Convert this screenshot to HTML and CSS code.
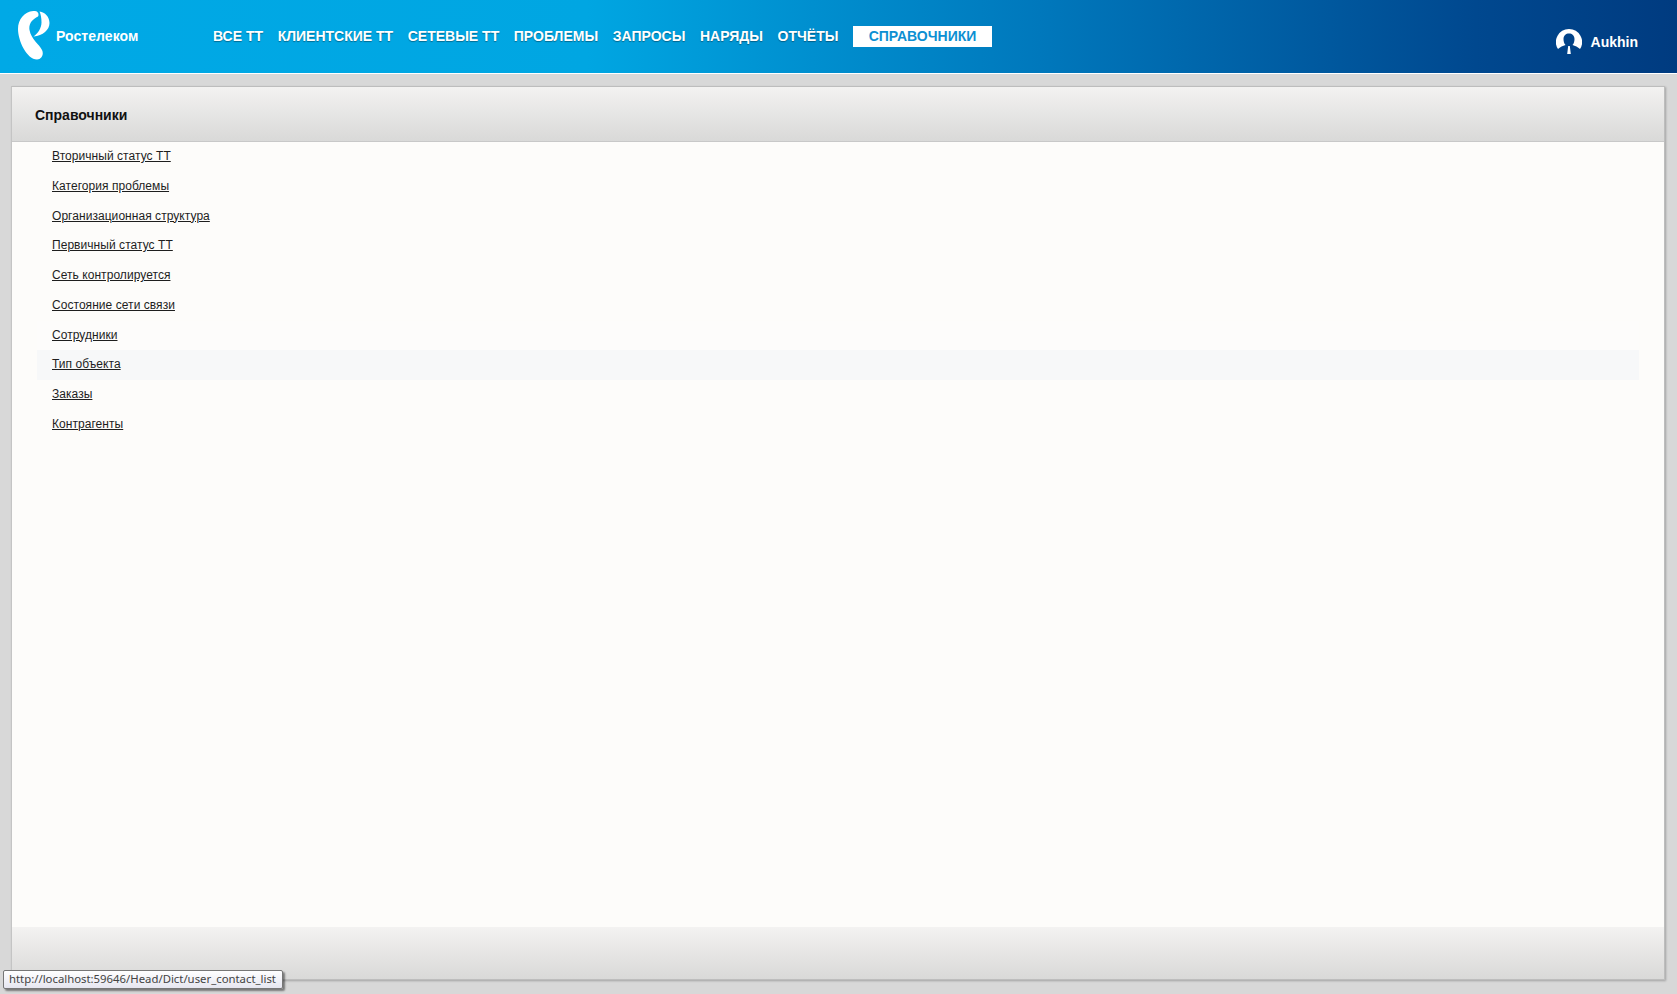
FILE: index.html
```html
<!DOCTYPE html>
<html lang="ru">
<head>
  <meta charset="UTF-8" />
  <title>Справочники</title>
  <link rel="stylesheet" href="styles.css">
</head>
<body>
  <header class="top-bar">
    <a class="brand" href="#">
      <svg class="brand-logo" width="32" height="49" viewBox="18 11 32 49">
        <path fill="#fff" d="M35 11C25 10.500 18 19 18 29C18 41 27 59.500 37 59.500C42 59.500 44 54 42 50C39 44 31 39 29.500 30C28.500 24 32 19.500 38 16.500C38.800 15.500 38.500 13.500 38 12.800C37.500 11.900 36.500 11.100 35 11Z"/>
        <path fill="#fff" d="M39.500 11.500C45 12 49.500 17 49.500 23C49.500 30 43 35.500 33.500 36.500C38 33.500 41.500 28 41.500 22.500C41.500 18 40.800 14.500 39.500 11.500Z"/>
      </svg>
      <span class="brand-name">Ростелеком</span>
    </a>
    <nav class="main-nav">
      <a href="#">ВСЕ ТТ</a>
      <a href="#">КЛИЕНТСКИЕ ТТ</a>
      <a href="#">СЕТЕВЫЕ ТТ</a>
      <a href="#">ПРОБЛЕМЫ</a>
      <a href="#">ЗАПРОСЫ</a>
      <a href="#">НАРЯДЫ</a>
      <a href="#">ОТЧЁТЫ</a>
      <a href="#" class="active">СПРАВОЧНИКИ</a>
    </nav>
    <div class="user-box">
      <svg class="user-icon" width="26" height="26" viewBox="0 0 26 26">
        <path fill="#fff" d="M13 0A13 13 0 0 1 24 20C22 18 19 16.800 16.500 16C18 14.500 18.500 12 18.500 10C18.500 6.500 16 4.500 13 4.500C10 4.500 7.500 6.500 7.500 10C7.500 12 8 14.500 9.500 16C7 16.800 4 18 2 20A13 13 0 0 1 13 0Z"/>
        <path fill="#fff" d="M12.200 17H13.800L14.800 25H11.200Z"/>
      </svg>
      <span class="user-name">Aukhin</span>
    </div>
  </header>

  <main class="panel">
    <div class="panel-head">
      <h1>Справочники</h1>
    </div>
    <ul class="dict-list">
      <li><a href="#">Вторичный статус ТТ</a></li>
      <li><a href="#">Категория проблемы</a></li>
      <li><a href="#">Организационная структура</a></li>
      <li><a href="#">Первичный статус ТТ</a></li>
      <li><a href="#">Сеть контролируется</a></li>
      <li><a href="#">Состояние сети связи</a></li>
      <li class="near"><a href="#">Сотрудники</a></li>
      <li class="hover"><a href="#">Тип объекта</a></li>
      <li><a href="#">Заказы</a></li>
      <li><a href="#">Контрагенты</a></li>
    </ul>
    <div class="panel-foot"></div>
  </main>

  <div class="url-tip">http://localhost:59646/Head/Dict/user_contact_list</div>
</body>
</html>
```

FILE: styles.css
```css
* {
  margin: 0;
  padding: 0;
  box-sizing: border-box;
}
html, body {
  height: 100%;
  overflow: hidden;
}
body {
  display: flex;
  flex-direction: column;
  background: #d8d8d8;
  font-family: "Liberation Sans", Arial, sans-serif;
}

/* header */
.top-bar {
  display: flex;
  align-items: flex-start;
  height: 74px;
  flex-shrink: 0;
  border-bottom: 1px solid #fff;
  background: linear-gradient(90deg, #00a9e6 0%, #00a6e2 35%, #0078bc 62%, #00488f 88%, #003b80 100%);
}
.brand {
  display: flex;
  align-items: flex-start;
  width: 213px;
  padding: 11px 0 0 18px;
  color: #fff;
  text-decoration: none;
}
.brand-logo {
  display: block;
}
.brand-name {
  margin: 17px 0 0 6px;
  font-size: 14px;
  line-height: 16px;
  font-weight: bold;
  letter-spacing: 0.05px;
}
.main-nav {
  display: flex;
  align-items: center;
  gap: 14.6px;
  height: 21px;
  margin-top: 26px;
}
.main-nav a {
  color: #fff;
  font-size: 14px;
  font-weight: bold;
  line-height: 21px;
  text-decoration: none;
  text-shadow: 0 1px 1px rgba(0,0,0,0.35);
}
.main-nav a.active {
  width: 139px;
  background: #fff;
  color: #0d8fd2;
  text-align: center;
  text-shadow: none;
}
.user-box {
  display: flex;
  align-items: center;
  gap: 9px;
  margin: 29px 0 0 auto;
  padding-right: 39px;
}
.user-icon {
  display: block;
}
.user-name {
  color: #fff;
  font-size: 14px;
  font-weight: bold;
}

/* panel */
.panel {
  display: flex;
  flex-direction: column;
  flex: 1;
  margin: 12px 12px 14px 11px;
  background: #fdfcfa;
  border: 1px solid #bdbdbd;
  border-left: 1px solid #c4c4c4;
  box-shadow: 1px 1px 2px rgba(0,0,0,0.25);
}
.panel-head {
  display: flex;
  align-items: center;
  height: 55px;
  flex-shrink: 0;
  padding: 2px 0 0 23px;
  border-bottom: 1px solid #c8c8c8;
  background: linear-gradient(180deg, #f3f2f1, #d9d9d8);
}
.panel-head h1 {
  color: #111;
  font-size: 14px;
  font-weight: bold;
}
.dict-list {
  flex: 1;
  padding: 0 25px;
  list-style: none;
}
.dict-list li {
  height: 29.75px;
  padding: 0 15px;
  font-size: 12px;
  line-height: 28px;
  letter-spacing: 0.05px;
}
.dict-list li.near {
  background: #fdfcfb;
}
.dict-list li.hover {
  background: #f7f8f9;
}
.dict-list a {
  color: #1e1e1e;
}
.panel-foot {
  height: 52px;
  flex-shrink: 0;
  background: linear-gradient(180deg, #f3f2f1, #d9d9d8);
}

/* browser link tooltip */
.url-tip {
  position: absolute;
  left: 3px;
  top: 970px;
  width: 280px;
  height: 19px;
  padding-left: 5px;
  border: 1px solid #767676;
  border-radius: 2px;
  background: linear-gradient(180deg, #ffffff, #e6e6f0);
  box-shadow: 2px 2px 2px rgba(0,0,0,0.45);
  color: #444;
  font-family: "Noto Sans", sans-serif;
  font-size: 11.35px;
  line-height: 16px;
  white-space: nowrap;
}
```
